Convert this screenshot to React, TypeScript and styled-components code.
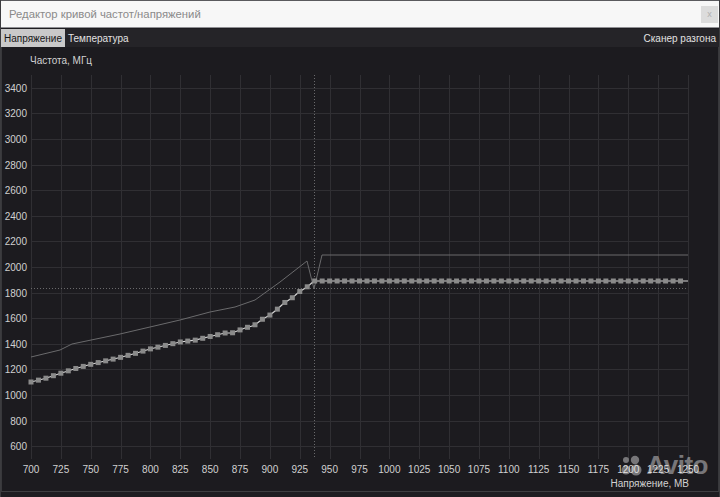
import React from "react";
import styled, { createGlobalStyle } from "styled-components";

const GlobalStyle = createGlobalStyle`
  html, body { margin: 0; padding: 0; background: #1c1b1f; }
  #root { width: 720px; height: 497px; }
`;

const Window = styled.div`
  position: relative;
  width: 720px;
  height: 497px;
  box-sizing: border-box;
  display: flex;
  flex-direction: column;
  background: #1e1d21;
  border-left: 1px solid #3c3c3f;
  border-right: 1px solid #3c3c3f;
  font-family: "Liberation Sans", Arial, sans-serif;
  overflow: hidden;
`;

const TitleBar = styled.div`
  height: 28px;
  box-sizing: border-box;
  display: flex;
  align-items: center;
  justify-content: space-between;
  padding: 0 1px 0 8px;
  background: #f7f7f7;
  border-top: 1px solid #5a5a5e;
  border-bottom: 1px solid #8f8f93;
`;

const Title = styled.span`
  font-size: 11.3px;
  color: #8a8a8a;
`;

const CloseButton = styled.div`
  width: 17px;
  height: 17px;
  background: #dcdcdc;
  color: #b0b0b0;
  font-size: 9px;
  display: flex;
  align-items: center;
  justify-content: center;
`;

const TabBar = styled.div`
  margin-top: 1px;
  height: 18px;
  display: flex;
  align-items: stretch;
  background: #252428;
`;

const Tab = styled.div<{ $active?: boolean }>`
  display: flex;
  align-items: center;
  padding: 0 3px;
  font-size: 10px;
  color: ${(p) => (p.$active ? "#161616" : "#e2e2e2")};
  background: ${(p) => (p.$active ? "#c9c9c9" : "transparent")};
`;

const Spacer = styled.div`
  flex: 1;
`;

const Content = styled.div`
  position: relative;
  flex: 1;
  margin-bottom: 5px;
  display: flex;
  flex-direction: column;
  background: #1c1b1f;
  border-left: 1px solid #38383b;
  border-right: 1px solid #38383b;
  border-bottom: 1px solid #3e3e41;
`;

const YTitle = styled.div`
  margin-top: 7px;
  height: 14px;
  line-height: 14px;
  padding-left: 28px;
  font-size: 10px;
  color: #d2d2d2;
`;

const ChartSvg = styled.svg`
  display: block;
  flex: none;
`;

const XTitle = styled.div`
  height: 12px;
  line-height: 12px;
  text-align: right;
  padding-right: 29px;
  font-size: 10px;
  color: #d2d2d2;
`;

const Watermark = styled.div`
  position: absolute;
  right: 10px;
  bottom: 10px;
  display: flex;
  align-items: center;
  gap: 3px;
  opacity: 0.4;
  pointer-events: none;
`;

const WatermarkText = styled.span`
  font-family: "Liberation Sans", Arial, sans-serif;
  font-weight: 700;
  font-size: 26px;
  color: #ffffff;
  letter-spacing: -0.5px;
`;

// page-coordinate helpers
const OX = 2; // svg left in page coords
const OY = 69; // svg top in page coords
const X0 = 31;
const X1 = 688;
const Y_TOP = 76;
const Y_BOT = 460;
const xv = (mv: number) => X0 + ((mv - 700) / 550) * (X1 - X0);
const yf = (f: number) => Y_TOP + ((3500 - f) / 3000) * (Y_BOT - Y_TOP);

const interp = (pts: number[][], x: number) => {
  for (let i = 0; i < pts.length - 1; i++) {
    const [xa, ya] = pts[i];
    const [xb, yb] = pts[i + 1];
    if (x >= xa && x <= xb) return ya + ((x - xa) / (xb - xa)) * (yb - ya);
  }
  return pts[pts.length - 1][1];
};

const lowerPts = [
  [31, 383], [45, 379.5], [60, 374.5], [75, 369.7], [90, 365.5], [105, 362],
  [120, 358.5], [135, 354.5], [150, 350], [165, 346.5], [180, 343], [195, 341.2],
  [210, 337.5], [225, 334], [232, 334], [245, 329], [254, 326.5], [262, 320.5],
  [270, 316], [277, 310.5], [284, 304], [292, 299], [299, 293], [307, 288],
  [314, 282], [688, 282],
];

const upperPts = [
  [31, 358], [60, 351], [72, 345], [120, 335], [150, 328], [180, 321],
  [210, 313], [235, 308], [255, 301], [280, 283], [307, 262], [314, 290],
  [322, 256], [688, 256],
];

const freqTicks = Array.from({ length: 15 }, (_, i) => 600 + i * 200);
const mvTicks = Array.from({ length: 23 }, (_, i) => 700 + i * 25);
const markers = Array.from({ length: 88 }, (_, i) => 700 + i * 6.25);

const Chart: React.FC = () => {
  const W = 716;
  const H = 410;
  return (
    <ChartSvg width={W} height={H} viewBox={`${OX} ${OY} ${W} ${H}`}>
      {mvTicks.map((mv) => (
        <line
          key={"v" + mv}
          x1={Math.round(xv(mv)) + 0.5}
          x2={Math.round(xv(mv)) + 0.5}
          y1={Y_TOP}
          y2={Y_BOT}
          stroke="#302f33"
          strokeWidth={1}
        />
      ))}
      {freqTicks.map((f) => (
        <line
          key={"h" + f}
          x1={X0}
          x2={X1}
          y1={Math.round(yf(f)) + 0.5}
          y2={Math.round(yf(f)) + 0.5}
          stroke="#302f33"
          strokeWidth={1}
        />
      ))}
      {freqTicks.map((f) => (
        <text
          key={"yl" + f}
          x={27}
          y={yf(f) + 4}
          textAnchor="end"
          fontSize={10}
          fontFamily='"Liberation Sans", Arial, sans-serif'
          fill="#d0d0d0"
        >
          {f}
        </text>
      ))}
      {mvTicks.map((mv) => (
        <text
          key={"xl" + mv}
          x={xv(mv)}
          y={473.5}
          textAnchor="middle"
          fontSize={10}
          fontFamily='"Liberation Sans", Arial, sans-serif'
          fill="#d0d0d0"
        >
          {mv}
        </text>
      ))}
      <polyline
        points={upperPts.map((p) => p.join(",")).join(" ")}
        fill="none"
        stroke="#6a6a6c"
        strokeWidth={1}
      />
      <line x1={314.5} x2={314.5} y1={Y_TOP} y2={Y_BOT} stroke="#6a6a6c" strokeDasharray="1 2" />
      <line x1={X0} x2={X1} y1={289.5} y2={289.5} stroke="#6a6a6c" strokeDasharray="1 2" />
      <polyline
        points={lowerPts.map((p) => p.join(",")).join(" ")}
        fill="none"
        stroke="#d6d6d6"
        strokeWidth={1.2}
      />
      {markers.map((mv) => {
        const x = xv(mv);
        const y = interp(lowerPts, x);
        return <rect key={"m" + mv} x={x - 2.5} y={y - 2.5} width={5} height={5} fill="#8a8a8a" />;
      })}
    </ChartSvg>
  );
};

const AvitoLogo: React.FC = () => (
  <svg width="22" height="22" viewBox="0 0 22 22">
    <circle cx="5" cy="5" r="3" fill="#fff" />
    <circle cx="14" cy="5" r="4.2" fill="#fff" />
    <circle cx="5" cy="15" r="4.5" fill="#fff" />
    <circle cx="15" cy="15" r="5.5" fill="#fff" />
  </svg>
);

export default function App() {
  return (
    <>
      <GlobalStyle />
      <Window>
        <TitleBar>
          <Title>Редактор кривой частот/напряжений</Title>
          <CloseButton>x</CloseButton>
        </TitleBar>
        <TabBar>
          <Tab $active>Напряжение</Tab>
          <Tab>Температура</Tab>
          <Spacer />
          <Tab>Сканер разгона</Tab>
        </TabBar>
        <Content>
          <YTitle>Частота, МГц</YTitle>
          <Chart />
          <XTitle>Напряжение, МВ</XTitle>
          <Watermark>
            <AvitoLogo />
            <WatermarkText>Avito</WatermarkText>
          </Watermark>
        </Content>
      </Window>
    </>
  );
}
